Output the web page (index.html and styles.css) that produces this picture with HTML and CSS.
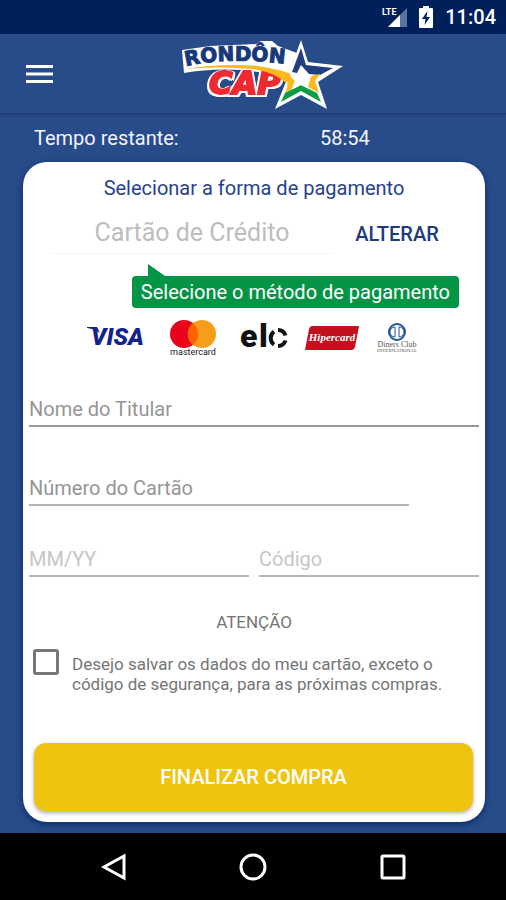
FILE: index.html
```html
<!DOCTYPE html>
<html lang="pt-BR">
	<head>
		<meta charset="utf-8">
		<meta name="viewport" content="width=device-width, initial-scale=1">
		<title>Rondôn Cap - Pagamento</title>
		<link rel="stylesheet" href="styles.css">
	</head>
	<body>
		<div class="status">
			<svg class="signal" viewBox="0 0 26 24" width="26" height="24">
				<path d="M26 3V22H7Z" fill="#5c739f"/>
				<path d="M19 10V22H7Z" fill="#fff"/>
				<text x="1" y="10" class="lte">LTE</text>
			</svg>
			<svg class="battery" viewBox="0 0 14 22" width="14" height="22">
				<path d="M4 0H10V2H13Q14 2 14 3V21Q14 22 13 22H1Q0 22 0 21V3Q0 2 1 2H4Z" fill="#fff"/>
				<path d="M8.500 5L3 13H6.500L5.500 19L11 11H7.500Z" fill="#00205b"/>
			</svg>
			<span class="clock">11:04</span>
		</div>
		<header class="bar">
			<button class="menu" type="button" aria-label="Menu">
				<svg viewBox="0 0 27 20" width="27" height="20">
					<path d="M0 2.500H27M0 10H27M0 17.500H27" stroke="#fff" stroke-width="3"/>
				</svg>
			</button>
			<svg class="logo" viewBox="0 0 180 80" width="180" height="80" role="img" aria-label="Rondôn Cap">
				<defs>
					<path id="arc" d="M16 32Q64 21 140 33"/>
				</defs>
				<path d="M12 16L40 12L86 10L91 7H102L108 12L127 19L132 44L72 36Q40 34 14 39Z" fill="#fff"/>
				<text x="39" y="60" class="cap">CAP</text>
				<path d="M15 35Q52 29 88 32Q112 35 130 44L120 54Q110 39 82 35Q50 32 15 35Z" fill="#fbb91e"/>
				<text class="rondon"><textPath href="#arc">RONDÔN</textPath></text>
				<path d="M131 6L138 28L173 32L148 48L157 75L131 61L105 75L115 50L120 43L122 31Z" fill="#fff"/>
				<path d="M131 14L136 31L163 34L150 41L139 40L131 31L127 39L122 38Z" fill="#203f7c"/>
				<path d="M118 41L126 43L122 55L115 59Q121 50 113 38Z" fill="#fbb91e"/>
				<path d="M141 42L150 40L145 47L149 59L138 53Z" fill="#fbb91e"/>
				<path d="M131 51L147 59L151 68L131 57L111 68L115 59Z" fill="#0c9b48"/>
				<path d="M131 34L134 41L142 42L136 48L139 55L131 51L123 55L126 48L120 42L128 41Z" fill="#fff"/>
			</svg>
		</header>
		<main>
			<div class="timer">
				<span>Tempo restante:</span>
				<time>58:54</time>
			</div>
			<form class="card">
				<h1>Selecionar a forma de pagamento</h1>
				<div class="method">
					<span class="method-name">Cartão de Crédito</span>
					<button class="change" type="button">ALTERAR</button>
				</div>
				<div class="tip">Selecione o método de pagamento</div>
				<div class="brands">
					<svg viewBox="0 0 62 40" width="62" height="40">
						<text x="5" y="28" class="visa">VISA</text>
						<path d="M1 10H11L14 16Q9 12 1 11Z" fill="#14238c"/>
					</svg>
					<svg viewBox="0 0 52 40" width="52" height="40">
						<circle cx="18" cy="17" r="14" fill="#e8051c"/>
						<circle cx="36" cy="17" r="14" fill="#f79d1c"/>
						<path d="M27 6A14 14 0 0 1 27 28A14 14 0 0 1 27 6Z" fill="#ff6200"/>
						<text x="27" y="38" class="master">mastercard</text>
					</svg>
					<svg viewBox="0 0 52 40" width="52" height="40">
						<text x="4 23" y="30" class="elo">el</text>
						<path d="M38 14.500A8 8 0 0 0 38 27.500" fill="none" stroke="#111" stroke-width="4"/>
						<path d="M42 13A8 8 0 0 1 49.500 18.500M49.500 23.500A8 8 0 0 1 42 29" fill="none" stroke="#111" stroke-width="4"/>
					</svg>
					<svg viewBox="0 0 54 40" width="54" height="40">
						<path d="M7 9H54L50 30Q49 33 46 33H0L4 12Q5 9 7 9Z" fill="#c2101d"/>
						<text x="27" y="24" class="hiper">Hipercard</text>
					</svg>
					<svg viewBox="0 0 42 40" width="42" height="40">
						<circle cx="20" cy="15" r="8" fill="#fff" stroke="#245494" stroke-width="2"/>
						<path d="M18 10A5 5 0 0 0 18 20ZM22 10A5 5 0 0 1 22 20Z" fill="#fff" stroke="#245494" stroke-width="1"/>
						<text x="20" y="30" class="diners">Diners Club</text>
						<text x="20" y="35" class="inter">INTERNATIONAL</text>
					</svg>
				</div>
				<input class="field name" type="text" placeholder="Nome do Titular" aria-label="Nome do Titular">
				<input class="field number" type="text" placeholder="Número do Cartão" aria-label="Número do Cartão">
				<div class="pair">
					<input class="field pale" type="text" placeholder="MM/YY" aria-label="MM/YY">
					<input class="field pale" type="text" placeholder="Código" aria-label="Código">
				</div>
				<h2>ATENÇÃO</h2>
				<div class="save">
					<input id="save" type="checkbox">
					<label for="save">Desejo salvar os dados do meu cartão, exceto o código de segurança, para as próximas compras.</label>
				</div>
				<button class="finish" type="submit">FINALIZAR COMPRA</button>
			</form>
		</main>
		<nav class="nav">
			<button type="button" aria-label="Voltar">
				<svg viewBox="0 0 28 28" width="28" height="28"><path d="M25 3V25L5 14Z"/></svg>
			</button>
			<button type="button" aria-label="Início">
				<svg viewBox="0 0 28 28" width="28" height="28"><circle cx="14" cy="14" r="12"/></svg>
			</button>
			<button type="button" aria-label="Recentes">
				<svg viewBox="0 0 28 28" width="28" height="28"><rect x="3" y="3" width="22" height="22" rx="1"/></svg>
			</button>
		</nav>
	</body>
</html>
```
FILE: styles.css
```css
*{
	box-sizing: border-box;
}
body, h1, h2, form{
	margin: 0;
	padding: 0;
}
body{
	min-height: 100vh;
	display: flex;
	flex-direction: column;
	font-family: Roboto,"Liberation Sans",sans-serif;
	background: #284b89;
}
button, input{
	margin: 0;
	padding: 0;
	border: none;
	background: none;
	font-family: inherit;
}
svg{
	display: block;
	overflow: visible;
}
.status{
	height: 34px;
	padding: 0 10px;
	display: flex;
	justify-content: flex-end;
	align-items: center;
	gap: 12px;
	background: #00205b;
	color: #fff;
}
.clock{
	font-size: 20px;
	font-weight: 500;
}
.lte{
	font-size: 9px;
	font-weight: 700;
	fill: #fff;
}
.bar{
	height: 80px;
	padding: 0 26px;
	display: grid;
	grid-template-columns: 1fr auto 1fr;
	align-items: center;
	border-bottom: 1px solid #1f3d76;
	box-shadow: 0 1px 2px #1f3d76;
}
.menu{
	width: 27px;
}
.logo{
	margin-left: 14px;
}
.rondon{
	font-family: "DejaVu Sans",sans-serif;
	font-size: 20px;
	font-weight: 700;
	fill: #17397a;
	stroke: #17397a;
	stroke-width: 1px;
}
.cap{
	font-family: "DejaVu Sans",sans-serif;
	font-size: 32px;
	font-weight: 700;
	font-style: italic;
	fill: #ee2a30;
	stroke: #ee2a30;
	stroke-width: 2px;
	filter: drop-shadow(2px 0 0 #fff) drop-shadow(-2px 0 0 #fff) drop-shadow(0 2px 0 #fff);
}
main{
	flex: 1;
	padding: 0 21px 11px 23px;
}
.timer{
	height: 48px;
	padding: 0 11px;
	display: grid;
	grid-template-columns: 13fr 7fr;
	align-items: center;
	font-size: 20px;
	color: #f2f4fa;
}
.card{
	padding: 14px 6px 11px;
	display: flex;
	flex-direction: column;
	background: #fff;
	border-radius: 24px;
	box-shadow: 0 2px 6px #0b2a66;
}
h1{
	font-size: 20px;
	line-height: 24px;
	font-weight: 400;
	text-align: center;
	color: #27428a;
}
.method{
	margin: 14px 18px 0 22px;
	display: flex;
	align-items: center;
}
.method-name{
	flex: 1;
	height: 40px;
	line-height: 38px;
	font-size: 25px;
	text-align: center;
	color: #bdbdbd;
	border-bottom: 1px solid #f6f6f6;
}
.change{
	width: 128px;
	font-size: 20px;
	font-weight: 500;
	color: #1d3a80;
}
.tip{
	position: relative;
	align-self: flex-end;
	margin: 22px 20px 0 0;
	padding: 0 9px;
	line-height: 32px;
	font-size: 20px;
	color: #fff;
	background: #039545;
	border-radius: 4px;
}
.tip:before{
	content: "";
	position: absolute;
	left: 16px;
	top: -12px;
	border-top: 12px solid transparent;
	border-left: 17px solid #039545;
}
.brands{
	margin: 9px 60px 0 57px;
	display: flex;
	justify-content: space-between;
}
.visa{
	font-size: 24px;
	font-weight: 900;
	font-style: italic;
	fill: #14238c;
}
.master{
	font-size: 9px;
	text-anchor: middle;
	fill: #222;
}
.elo{
	font-size: 32px;
	font-weight: 900;
	fill: #111;
}
.hiper{
	font-family: "Liberation Serif",serif;
	font-size: 11px;
	font-weight: 700;
	font-style: italic;
	text-anchor: middle;
	fill: #fff;
}
.diners{
	font-family: "Liberation Serif",serif;
	font-size: 8px;
	text-anchor: middle;
	fill: #555;
}
.inter{
	font-family: "Liberation Serif",serif;
	font-size: 5px;
	text-anchor: middle;
	fill: #555;
}
.field{
	width: 100%;
	height: 36px;
	padding-top: 2px;
	font-size: 20px;
	color: #444;
	border-bottom: 2px solid #b5b5b5;
	outline: none;
}
.field::placeholder{
	color: #959595;
	opacity: 1;
}
.name{
	margin-top: 34px;
	border-bottom: 2px solid #999;
}
.number{
	width: calc(100% - 70px);
	margin-top: 43px;
}
.pair{
	margin-top: 35px;
	display: flex;
	gap: 10px;
}
.pale::placeholder{
	color: #c6c6c6;
}
h2{
	margin-top: 35px;
	font-size: 17px;
	line-height: 20px;
	font-weight: 400;
	text-align: center;
	color: #757575;
}
.save{
	margin-top: 17px;
	padding: 0 4px;
	display: flex;
	gap: 13px;
}
.save input{
	appearance: none;
	flex: none;
	width: 26px;
	height: 26px;
	border: 3px solid #777;
	border-radius: 3px;
}
.save input:checked{
	background: #777;
}
.save label{
	padding-top: 5px;
	font-size: 17px;
	line-height: 20px;
	color: #757575;
}
.finish{
	margin: 49px 6px 0 5px;
	height: 68px;
	font-size: 20px;
	font-weight: 500;
	color: #fff;
	background: #efc40f;
	border-radius: 12px;
	box-shadow: 0 2px 4px #aaa;
}
.nav{
	height: 67px;
	display: flex;
	justify-content: center;
	align-items: center;
	gap: 112px;
	background: #000;
}
.nav svg{
	fill: none;
	stroke: #fff;
	stroke-width: 3;
}
```
